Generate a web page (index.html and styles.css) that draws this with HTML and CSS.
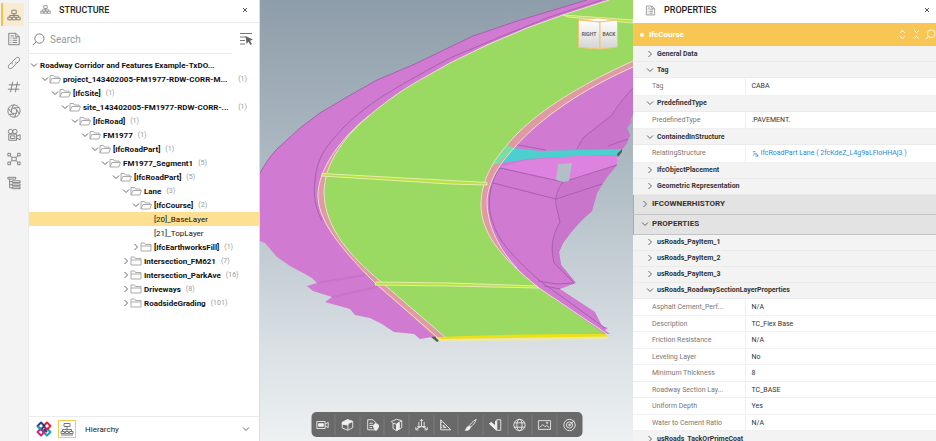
FILE: index.html
```
<!DOCTYPE html>
<html lang="en">
<head>
    <meta charset="UTF-8">
    <meta name="viewport" content="width=device-width, initial-scale=1.0">
    <title>Model Viewer</title>
    <link rel="stylesheet" href="styles.css">
</head>
<body>
    <!-- shared icons -->
    <svg class="sprite" aria-hidden="true">
        <symbol id="i-down" viewBox="0 0 8 8"><path d="M1 2.500 4 5.500 7 2.500"/></symbol>
        <symbol id="i-right" viewBox="0 0 8 8"><path d="M2.500 1 5.500 4 2.500 7"/></symbol>
        <symbol id="i-close" viewBox="0 0 8 8"><path d="M2 2 6 6M6 2 2 6"/></symbol>
        <symbol id="i-open" viewBox="0 0 12 10"><path d="M1 9V1.500h3.500l1 1.500H10v1.500M1 9l1.800-4.500H11.500L9.800 9z"/></symbol>
        <symbol id="i-folder" viewBox="0 0 12 10"><path d="M1 9V1h3.500l1 1.500H11V9zM1 4h10"/></symbol>
        <symbol id="i-tree" viewBox="0 0 16 16"><path d="M5.500 2.500h5v4h-5zM1 10.500h4v3H1zM6 10.500h4v3H6zM11 10.500h4v3h-4zM8 6.500v4M3 10.500v-2h10v2"/></symbol>
        <symbol id="i-doc" viewBox="0 0 16 16"><path d="M2 1.500h8l4 4v9H2zM10 1.500v4h4M6.500 7h5M6.500 9.500h5M6.500 12h5M4 7h1M4 9.500h1M4 12h1M4 4.500h4"/></symbol>
        <symbol id="i-search" viewBox="0 0 14 14"><circle cx="8" cy="6" r="5"/><path d="M4.500 9.500 1 13"/></symbol>
    </svg>

    <div class="app">
        <nav class="rail" aria-label="Panels">
            <button class="rail-btn active" aria-label="Structure"><svg><use href="#i-tree"/></svg></button>
            <button class="rail-btn" aria-label="Properties"><svg><use href="#i-doc"/></svg></button>
            <button class="rail-btn" aria-label="Links"><svg viewBox="0 0 16 16"><path d="M6.500 9.500C5 8 5.500 7 6.500 6L10 2.500c3-2.500 6 .5 3.500 3.500L11 8.500M9.500 6.500C11 8 10.500 9 9.500 10L6 13.500c-3 2.500-6-.5-3.500-3.500L5 7.500"/></svg></button>
            <button class="rail-btn" aria-label="Numbers"><svg viewBox="0 0 16 16"><path d="M6.500 2 4 14M12 2 9.500 14M2 5.500h13M1 10.500h13"/></svg></button>
            <button class="rail-btn" aria-label="Snapshots"><svg viewBox="0 0 16 16"><circle cx="8" cy="8" r="7"/><path d="M8 4.500l3 1.800v3.500L8 11.500 5 9.800V6.300zM8 4.500 13.500 4M11 6.300 14 11.500M11 9.800 8.500 15M8 11.500 2.500 12M5 9.800 1.500 5M5 6.300 7.500 1"/></svg></button>
            <button class="rail-btn" aria-label="Camera"><svg viewBox="0 0 16 16"><circle cx="4" cy="4" r="2.500"/><circle cx="9" cy="4" r="2.500"/><path d="M2 7h9v7H2zM11 9.500l4-2v6l-4-2M4 9h5v3H4z"/></svg></button>
            <button class="rail-btn" aria-label="Relations"><svg viewBox="0 0 16 16"><path d="M1 1.500h3v3H1zM12 1.500h3v3h-3zM1 11.500h3v3H1zM12 11.500h3v3h-3zM5.500 6h5v4h-5zM4 4.500 5.500 6M12 4.500 10.500 6M4 11.500 5.500 10M12 11.500 10.500 10"/></svg></button>
            <button class="rail-btn" aria-label="Outline"><svg viewBox="0 0 16 16"><path d="M1 1.500h9v2H1zM3 3.500v10h3M3 6.500h3M3 10h3M6 5.500h9v2H6zM6 9h9v2H6zM6 12.500h9v2H6z"/></svg></button>
        </nav>

        <section class="structure">
            <header class="panel-head">
                <svg class="head-icon"><use href="#i-tree"/></svg>
                <h2>STRUCTURE</h2>
                <button class="close" aria-label="Close structure"><svg><use href="#i-close"/></svg></button>
            </header>
            <div class="search-row">
                <label class="search">
                    <svg><use href="#i-search"/></svg>
                    <input type="text" placeholder="Search" aria-label="Search">
                </label>
                <button class="filter" aria-label="Filter"><svg viewBox="0 0 14 14"><path d="M1 1.500h12M1 5h6M1 8.500h5M1 12h5"/><path class="solid" d="M6.500 4l7.500 3.500-3 1.200 2 3.300-1.500 1-2-3.300L7.500 12z"/></svg></button>
            </div>

            <ul class="tree" role="tree">
                <li class="node root"><svg class="chev"><use href="#i-down"/></svg><b>Roadway Corridor and Features Example-TxDO...</b></li>
                <li class="node l1"><svg class="chev"><use href="#i-down"/></svg><svg class="folder"><use href="#i-open"/></svg><b>project_143402005-FM1977-RDW-CORR-M...</b><span class="count end">(1)</span></li>
                <li class="node l2"><svg class="chev"><use href="#i-down"/></svg><svg class="folder"><use href="#i-open"/></svg><b>[IfcSite]</b><span class="count">(1)</span></li>
                <li class="node l3"><svg class="chev"><use href="#i-down"/></svg><svg class="folder"><use href="#i-open"/></svg><b>site_143402005-FM1977-RDW-CORR-...</b><span class="count end">(1)</span></li>
                <li class="node l4"><svg class="chev"><use href="#i-down"/></svg><svg class="folder"><use href="#i-open"/></svg><b>[IfcRoad]</b><span class="count">(1)</span></li>
                <li class="node l5"><svg class="chev"><use href="#i-down"/></svg><svg class="folder"><use href="#i-open"/></svg><b>FM1977</b><span class="count">(1)</span></li>
                <li class="node l6"><svg class="chev"><use href="#i-down"/></svg><svg class="folder"><use href="#i-open"/></svg><b>[IfcRoadPart]</b><span class="count">(1)</span></li>
                <li class="node l7"><svg class="chev"><use href="#i-down"/></svg><svg class="folder"><use href="#i-open"/></svg><b>FM1977_Segment1</b><span class="count">(5)</span></li>
                <li class="node l8"><svg class="chev"><use href="#i-down"/></svg><svg class="folder"><use href="#i-open"/></svg><b>[IfcRoadPart]</b><span class="count">(5)</span></li>
                <li class="node l9"><svg class="chev"><use href="#i-down"/></svg><svg class="folder"><use href="#i-open"/></svg><b>Lane</b><span class="count">(3)</span></li>
                <li class="node l10"><svg class="chev"><use href="#i-down"/></svg><svg class="folder"><use href="#i-open"/></svg><b>[IfcCourse]</b><span class="count">(2)</span></li>
                <li class="node leaf selected">[20]_BaseLayer</li>
                <li class="node leaf">[21]_TopLayer</li>
                <li class="node l10"><svg class="chev"><use href="#i-right"/></svg><svg class="folder"><use href="#i-folder"/></svg><b>[IfcEarthworksFill]</b><span class="count">(1)</span></li>
                <li class="node l9"><svg class="chev"><use href="#i-right"/></svg><svg class="folder"><use href="#i-folder"/></svg><b>Intersection_FM621</b><span class="count">(7)</span></li>
                <li class="node l9"><svg class="chev"><use href="#i-right"/></svg><svg class="folder"><use href="#i-folder"/></svg><b>Intersection_ParkAve</b><span class="count">(16)</span></li>
                <li class="node l9"><svg class="chev"><use href="#i-right"/></svg><svg class="folder"><use href="#i-folder"/></svg><b>Driveways</b><span class="count">(8)</span></li>
                <li class="node l9"><svg class="chev"><use href="#i-right"/></svg><svg class="folder"><use href="#i-folder"/></svg><b>RoadsideGrading</b><span class="count">(101)</span></li>
            </ul>

            <footer class="structure-foot">
                <svg class="logo" viewBox="0 0 16 16" aria-hidden="true">
                    <path class="logo-cyan" d="M11 7.500 14.500 11 11 14.500 7.500 11z"/>
                    <path class="logo-pink" d="M5 7.500 8.500 11 5 14.500 1.500 11z"/>
                    <path class="logo-red" d="M11 1.500 14.500 5 11 8.500 7.500 5z"/>
                    <path class="logo-blue" d="M5 1.500 8.500 5 5 8.500 1.500 5z"/>
                    <path class="logo-cyan" d="M1.500 5 5 8.500"/>
                    <path class="logo-red" d="M7.500 11 5 8"/>
                    <path class="logo-blue" d="M8 8 11 11"/>
                </svg>
                <button class="mode" aria-label="Tree mode"><svg viewBox="0 0 14 14"><path d="M4 1.500h6v3H4zM7 4.500v5M2.500 9.500v-2h9v2M1 9.500h3.500v2H1zM5.500 9.500h3v2h-3zM9.500 9.500H13v2H9.500zM1 13h12"/></svg></button>
                <select class="view-select" aria-label="View">
                    <option>Hierarchy</option>
                </select>
                <svg class="chev"><use href="#i-down"/></svg>
            </footer>
        </section>

        <main class="viewer">
            <svg class="scene" viewBox="260 0 373 441" preserveAspectRatio="xMidYMid slice" role="img" aria-label="Road model">
                <!-- embankment, left -->
                <path class="grading" d="M587 0 557 9 517 21 473 36 450 47 415 64 377 80 347 97 320 113 300 128 277 149C270 156 265 164 260 173V241L265 243 277 257 290 266 305 274 312 278 317 283 307 286 313 291 332 297 325 302 350 309 355 315 370 318 382 324 394 332 414 334 420 339 432 337 445 337 400 200 640 0z"/>
                <path class="crease" d="M587 0 557 9 517 21 473 36 450 47 415 64 377 80 347 97 320 113 300 128 277 149C270 156 265 164 260 173"/>
                <path class="crease" d="M602 0 550 17 500 37 450 58C420 74 390 91 377 100 365 108 352 119 343 128 333 139 327 146 323 153 318 162 316 170 315 180 313 195 315 207 322 221"/>
                <path class="shade" d="M317 283 365 275 M332 297 377 287"/>
                <!-- embankment, right -->
                <path class="grading" d="M633 64V114L630 118 632 122 627 128 630 135 627 143 622 150 617 157V165L607 177 600 188 597 193 592 211 582 220 572 231 563 243 559 252 561 265 576 283 560 289 595 312 602 326 608 328 605 330 610 334 600 334 480 260V160L540 100z"/>
                <path class="grading-light" d="M500 167 527 160 577 156 617 156V165L564 182z"/>
                <path class="grading-dark" d="M564 182 617 165 607 177 600 188 597 193 592 211 582 220 572 231 563 243 559 252 561 265 576 283 554 263C551 250 552 238 560 222L556 199zM633 88 612 115 583 138 577 149 622 150 627 143 630 135 627 128 633 114z"/>
                <path class="crease" d="M633 88C622 100 617 107 612 115L583 138 577 149M608 146 628 139M507 143 546 150M500 168 563 182 617 165M493 183 556 199 602 184M563 182C556 192 555 199 556 205L560 222C551 237 551 250 554 263L574 283M538 281 557 284 574 283M500 168C488 184 487 209 493 223 498 240 512 256 540 281L605 328M544 286 560 289"/>
                <path class="hole" d="M558 164 572 163 569 181 563 182 556 180z"/>
                <path class="culvert" d="M507 145 513 148 540 151 577 150 622 149 618 155 577 156 527 159 491 165z"/>
                <path class="culvert-end" d="M622 149V152L618 157 617 154z"/>
                <!-- pavement -->
                <path class="curb" d="M633 61C580 85 533 113 507 145 494 160 481 180 481 205 481 232 500 257 539 288L517 268C505 256 488 232 487 203 487 185 497 166 515 147 540 118 585 88 633 67z"/>
                <path class="curb" d="M370 115C340 138 318 170 318 195 318 217 333 241 375 283L435 337H445L380 281C350 256 325 228 324 193 324 170 337 142 370 115z"/>
                <path class="curb-culvert" d="M507 145 515 148C508 154 502 160 499 164L491 165C495 158 500 151 507 145z"/>
                <path class="pavement" d="M609 0 563 15 527 28 487 45 450 63 427 76C407 87 390 98 370 115 347 134 324 162 324 193 325 228 350 256 380 281L445 337 605 334 539 288C500 257 481 232 481 205 481 180 494 160 507 145 533 113 580 85 633 61V0z"/>
                <path class="edge" d="M609 0 563 15 527 28 487 45 450 63 427 76C407 87 390 98 370 115 347 134 324 162 324 193 325 228 350 256 380 281L445 337"/>
                <path class="edge" d="M370 115C340 138 318 170 318 195 318 217 333 241 375 283L437 337"/>
                <path class="edge" d="M633 61C580 85 533 113 507 145 494 160 481 180 481 205 481 232 500 257 539 288L607 334"/>
                <path class="edge" d="M633 67C585 88 540 118 515 147 497 166 487 185 487 203 488 232 505 256 517 268"/>
                <!-- transverse joints -->
                <path class="joint" d="M322 173.500 450 180.500 487 182.500V185L450 184 322 176zM376 282 450 283 537 286 539 288 450 286 375 285zM563 15 633 20V23L568 17z"/>
                <!-- pavement end face -->
                <path class="end-face" d="M437 337 520 334.500 605 334 608 337 440 340z"/>
                <path class="end-base" d="M440 339 608 336.500V339.500L439 342 435 337z"/>
                <path class="culvert-end" d="M431 337 435 336.500 439 341 437 342z"/>
            </svg>

            <svg class="view-cube" viewBox="0 0 42 34" role="img" aria-label="View cube">
                <defs>
                    <linearGradient id="cube-face" x1="0" y1="0" x2="0" y2="1">
                        <stop offset="0" stop-color="#fff"/>
                        <stop offset="1" stop-color="#d4d4d4"/>
                    </linearGradient>
                </defs>
                <path class="cube-top" d="M2 3 20 1 40 3 23 5z"/>
                <path class="cube-side" d="M1.500 3 23 5V32L1.500 30.500z"/>
                <path class="cube-side" d="M23 5 40.500 3V30L23 32z"/>
                <text x="12" y="19">RIGHT</text>
                <text x="32" y="19">BACK</text>
            </svg>

            <div class="toolbar">
                <button aria-label="Camera"><svg viewBox="0 0 16 16"><path d="M1.500 4h9.500v8H1.500zM11 7l3.500-2v6L11 9"/><path class="solid" d="M3.500 6.500h5.500v3H3.500z"/></svg></button>
                <button aria-label="Shading"><svg viewBox="0 0 16 16"><path d="M2 5 8 2l6 2v7l-5.500 3L2 11.500zM8.500 7V14"/><path class="solid" d="M2 5 8 2l6 2-5.500 2.500V8L2 7z"/></svg></button>
                <button aria-label="Report"><svg viewBox="0 0 16 16"><path d="M2.500 2h6l3 3v8.500h-9zM4.500 6h4M4.500 8.500h4M4.500 11h3"/><path class="solid" d="M12 6.500a3 3 0 0 1 3 3c0 2-3 5-3 5s-3-3-3-5a3 3 0 0 1 3-3z"/></svg></button>
                <button aria-label="Section box"><svg viewBox="0 0 16 16"><path d="M2 4 8 1.500l6 1.500v8L8 14.500 4 12V6L2 4zM4 6l4 1v7.500M8 7l6-4M11 5v8"/><path class="solid" d="M8.500 7 11 5.500v7L8.500 14z"/></svg></button>
                <button aria-label="Axes"><svg viewBox="0 0 16 16"><path d="M8 1.500V9M8 9 2 13M8 9l6 4M5 4.500v7M11 4.500v7M6 3.500l2-2 2 2M1.500 10.500V13.500h3M14.500 10.500v3h-3M3 10h10"/></svg></button>
                <button aria-label="Measure"><svg viewBox="0 0 16 16"><path d="M2.500 2 14 13.500H2.500zM5.500 8l3 3h-3zM2.500 5H4M2.500 8H4M2.500 11H4"/></svg></button>
                <button aria-label="Paint"><svg viewBox="0 0 16 16"><path d="M14.500 1.500C10 4 8 7 7 8.500l1.500 1.500C10.500 8.500 13 6 14.500 1.500z"/><path class="solid" d="M6.500 9 8 10.500C7.500 13.500 4.500 14.500 2 14c1.500-1 1-4 4.500-5z"/></svg></button>
                <button aria-label="Clip"><svg viewBox="0 0 16 16"><path d="M9.500 2H14v12H9.500z"/><path class="solid" d="M1 6.500 3 5l5 4V3.500h1V14z"/></svg></button>
                <button aria-label="Globe"><svg viewBox="0 0 16 16"><circle cx="8" cy="8" r="6.500"/><ellipse cx="8" cy="8" rx="3" ry="6.500"/><path d="M2 5.500h12M2 10.500h12"/></svg></button>
                <button aria-label="Image"><svg viewBox="0 0 16 16"><path d="M1 3h14v10H1zM2.500 11 6 7.500l2.500 2.500 2-1.500 3 2.500"/><circle cx="11" cy="5.500" r=".8"/></svg></button>
                <button aria-label="Target"><svg viewBox="0 0 16 16"><circle cx="8" cy="8" r="6.500"/><circle cx="8" cy="8" r="3.500"/><circle cx="8" cy="8" r="1"/><path d="M8 8l5.500-5"/></svg></button>
            </div>
        </main>

        <section class="properties">
            <header class="panel-head">
                <svg class="head-icon"><use href="#i-doc"/></svg>
                <h2>PROPERTIES</h2>
                <button class="close" aria-label="Close properties"><svg><use href="#i-close"/></svg></button>
            </header>
            <div class="entity">
                <span class="dot"></span>
                <h3>IfcCourse</h3>
                <button aria-label="Expand all"><svg viewBox="0 0 12 12"><path d="M3.500 4 6 1.500 8.500 4M3.500 8 6 10.500 8.500 8"/></svg></button>
                <button aria-label="Collapse all"><svg viewBox="0 0 12 12"><path d="M3.500 1.500 6 4 8.500 1.500M3.500 10.500 6 8l2.500 2.500"/></svg></button>
                <button aria-label="Search properties"><svg><use href="#i-search"/></svg></button>
            </div>

            <button class="group"><svg class="chev"><use href="#i-right"/></svg>General Data</button>
            <button class="group"><svg class="chev"><use href="#i-down"/></svg>Tag</button>
            <table>
                <tr><th scope="row">Tag</th><td>CABA</td></tr>
            </table>
            <button class="group"><svg class="chev"><use href="#i-down"/></svg>PredefinedType</button>
            <table>
                <tr><th scope="row">PredefinedType</th><td>.PAVEMENT.</td></tr>
            </table>
            <button class="group"><svg class="chev"><use href="#i-down"/></svg>ContainedInStructure</button>
            <table>
                <tr><th scope="row">RelatingStructure</th><td><a href="#"><svg viewBox="0 0 8 8"><path d="M1 2h3M2 4.500h3M4 7h3M5 4l2 3M1 6h1"/></svg>IfcRoadPart Lane ( 2fcKdeZ_L4g9aLFloHHAj3 )</a></td></tr>
            </table>
            <button class="group"><svg class="chev"><use href="#i-right"/></svg>IfcObjectPlacement</button>
            <button class="group"><svg class="chev"><use href="#i-right"/></svg>Geometric Representation</button>

            <button class="section"><svg class="chev"><use href="#i-right"/></svg>IFCOWNERHISTORY</button>
            <button class="section"><svg class="chev"><use href="#i-down"/></svg>PROPERTIES</button>

            <button class="group"><svg class="chev"><use href="#i-right"/></svg>usRoads_PayItem_1</button>
            <button class="group"><svg class="chev"><use href="#i-right"/></svg>usRoads_PayItem_2</button>
            <button class="group"><svg class="chev"><use href="#i-right"/></svg>usRoads_PayItem_3</button>
            <button class="group"><svg class="chev"><use href="#i-down"/></svg>usRoads_RoadwaySectionLayerProperties</button>
            <table>
                <tr><th scope="row">Asphalt Cement_Perf...</th><td>N/A</td></tr>
                <tr><th scope="row">Description</th><td>TC_Flex Base</td></tr>
                <tr><th scope="row">Friction Resistance</th><td>N/A</td></tr>
                <tr><th scope="row">Leveling Layer</th><td>No</td></tr>
                <tr><th scope="row">Minimum Thickness</th><td>8</td></tr>
                <tr><th scope="row">Roadway Section Lay...</th><td>TC_BASE</td></tr>
                <tr><th scope="row">Uniform Depth</th><td>Yes</td></tr>
                <tr><th scope="row">Water to Cement Ratio</th><td>N/A</td></tr>
            </table>
            <button class="group"><svg class="chev"><use href="#i-right"/></svg>usRoads_TackOrPrimeCoat</button>
        </section>
    </div>
</body>
</html>
```
FILE: styles.css
```
* {
    box-sizing: border-box;
}
body {
    margin: 0;
    font-family: Roboto, Arial, sans-serif;
    font-size: 8px;
    color: #222;
    background-color: #fff;
}
button, input, select {
    font: inherit;
    color: inherit;
    background: none;
    border: none;
    margin: 0;
    padding: 0;
}
button {
    cursor: pointer;
}
svg {
    display: block;
    flex: none;
    fill: none;
    stroke: #777;
}
.sprite {
    position: absolute;
    width: 0;
    height: 0;
}
.app {
    display: grid;
    grid-template-columns: 29px 231px 1fr 303px;
    height: 100vh;
    overflow: hidden;
}

/* Left icon rail */
.rail {
    background-color: #f3f3f3;
    border-right: 1px solid #ebebeb;
    padding: 3px 4px 0 1px;
    display: flex;
    flex-direction: column;
    gap: 1px;
}
.rail-btn {
    height: 23px;
    border-left: 2px solid transparent;
    display: flex;
    align-items: center;
    justify-content: center;
}
.rail-btn.active {
    background-color: #f8ebd0;
    border-left-color: #f8c040;
}
.rail-btn svg {
    width: 14px;
    height: 14px;
}

/* Panel header */
.panel-head {
    height: 23px;
    flex: none;
    padding: 0 5px 3px 12px;
    display: flex;
    align-items: center;
}
.panel-head h2 {
    margin: 0 auto 0 8px;
    font-size: 9px;
    font-weight: 500;
}
.head-icon {
    width: 11px;
    height: 11px;
}
.close svg {
    width: 8px;
    height: 8px;
    stroke: #555;
}

/* Structure panel */
.structure {
    display: flex;
    flex-direction: column;
    min-width: 0;
    border-right: 1px solid #ddd;
}
.structure .panel-head {
    padding-left: 11px;
    padding-right: 10px;
    border-bottom: 1px solid #ebebeb;
}
.search-row {
    display: flex;
    align-items: center;
    padding-right: 6px;
    gap: 7px;
}
.search {
    flex: 1;
    height: 31px;
    padding: 2px 0 0 3px;
    display: flex;
    align-items: center;
    gap: 5px;
    border-bottom: 1px solid #ebebeb;
}
.search svg {
    width: 13px;
    height: 13px;
}
.search input {
    width: 100%;
    min-width: 0;
    font-size: 10px;
    outline: none;
}
.search input::placeholder {
    color: #999;
}
.filter svg {
    width: 14px;
    height: 14px;
}
.filter .solid {
    fill: #666;
    stroke: none;
}
.tree {
    flex: 1;
    list-style: none;
    margin: 0;
    padding: 4px 0 0;
    overflow: hidden;
}
.node {
    height: 14px;
    display: flex;
    align-items: center;
    white-space: nowrap;
    color: #111;
}
.node b {
    font-weight: 700;
}
.chev {
    width: 8px;
    height: 8px;
    stroke: #666;
}
.folder {
    width: 12px;
    height: 10px;
    margin-right: 2px;
    stroke: #aaa;
}
.count {
    margin-left: 5px;
    font-size: 7px;
    color: #999;
}
.count.end {
    margin-left: auto;
    padding-right: 12px;
}
.root { padding-left: 1px; }
.root .chev { margin-right: 2px; }
.l1 { padding-left: 12px; }
.l2 { padding-left: 22px; }
.l3 { padding-left: 32px; }
.l4 { padding-left: 42px; }
.l5 { padding-left: 52px; }
.l6 { padding-left: 62px; }
.l7 { padding-left: 72px; }
.l8 { padding-left: 83px; }
.l9 { padding-left: 93px; }
.l10 { padding-left: 103px; }
.leaf { padding-left: 125px; }
.selected {
    background-color: #fde092;
}
.structure-foot {
    height: 25px;
    padding: 0 9px 0 7px;
    border-top: 1px solid #ebebeb;
    display: flex;
    align-items: center;
    gap: 6px;
}
.logo {
    width: 16px;
    height: 16px;
    stroke-width: 2;
    stroke-linejoin: round;
}
.logo-blue { stroke: #2b3f8c; }
.logo-red { stroke: #e0203c; }
.logo-cyan { stroke: #12a5b5; }
.logo-pink { stroke: #c4268c; }
.mode {
    border: 1px solid #f8c653;
    padding: 1px;
}
.mode svg {
    width: 14px;
    height: 14px;
}
.view-select {
    flex: 1;
    margin-left: 3px;
    appearance: none;
    font-size: 8px;
}

/* 3D viewer */
.viewer {
    position: relative;
    min-width: 0;
    overflow: hidden;
    background: linear-gradient(#8e9daa, #b4c0c8 45%, #dbe1e5 80%, #edf1f2);
}
.scene {
    width: 100%;
    height: 100%;
    stroke: none;
}
.grading { fill: #d07ad2; }
.grading-light { fill: #de82e0; }
.grading-dark { fill: #c975cb; }
.pavement { fill: #9ad962; }
.curb { fill: #df9aa2; }
.curb-culvert { fill: #7bdd9f; }
.culvert { fill: #4ccfcf; }
.culvert-end { fill: #556055; }
.hole { fill: #b2bfc7; }
.joint {
    fill: #bde03c;
    stroke: #e2efb0;
    stroke-width: 1;
}
.end-face { fill: #f0e010; }
.end-base { fill: #e8e8b4; }
.edge {
    fill: none;
    stroke: #eddfd0;
    stroke-width: 1;
}
.crease {
    fill: none;
    stroke: #a95fae;
    stroke-width: 1;
}
.shade {
    fill: none;
    stroke: #c873ca;
    stroke-width: 2;
}
.view-cube {
    position: absolute;
    top: 17px;
    right: 14px;
    width: 42px;
    height: 34px;
    stroke: #f3c66c;
}
.cube-top { fill: #fff; }
.cube-side { fill: url(#cube-face); }
.view-cube text {
    font-size: 5px;
    font-weight: 700;
    text-anchor: middle;
    fill: #666;
    stroke: none;
}
.toolbar {
    position: absolute;
    left: 50%;
    bottom: 4px;
    transform: translateX(-50%);
    width: 271px;
    height: 25px;
    display: grid;
    grid-template-columns: repeat(11, 1fr);
    align-items: center;
    background-color: #696969;
    border-radius: 5px;
}
.toolbar button {
    height: 20px;
    display: flex;
    align-items: center;
    justify-content: center;
    border-right: 1px solid #7c7c7c;
}
.toolbar button:last-child {
    border-right: none;
}
.toolbar svg {
    width: 14px;
    height: 14px;
    stroke: #f0f0f0;
}
.toolbar .solid {
    fill: #f0f0f0;
}

/* Properties panel */
.properties {
    display: flex;
    flex-direction: column;
    min-width: 0;
    overflow: hidden;
    font-size: 7px;
}
.entity {
    height: 23px;
    flex: none;
    padding: 0 0 0 7px;
    display: flex;
    align-items: center;
    background-color: #f8c653;
    color: #fff;
}
.entity h3 {
    margin: 0 auto 0 5px;
    font-size: 8px;
    font-weight: 700;
}
.dot {
    width: 4px;
    height: 4px;
    border-radius: 50%;
    background-color: #fff;
}
.entity svg {
    width: 11px;
    height: 11px;
    margin-left: 3px;
    stroke: #fff;
}
.group, .section {
    flex: none;
    display: flex;
    align-items: center;
    text-align: left;
    font-weight: 700;
    color: #333;
}
.group {
    height: 16px;
    padding-left: 13px;
    gap: 3px;
    background-color: #f3f3f3;
    border-bottom: 1px solid #ebebeb;
}
.section {
    height: 20px;
    padding: 0 0 1px 7px;
    gap: 3px;
    font-size: 8px;
    background-color: #e3e3e3;
    border-left: 1px solid #aaa;
    border-bottom: 1px solid #c4c4c4;
}
table {
    width: 100%;
    flex: none;
    table-layout: fixed;
    border-collapse: collapse;
}
tr {
    height: 17px;
}
tr:nth-child(even) {
    height: 16px;
}
th, td {
    padding: 0;
    border-bottom: 1px solid #f0f0f0;
    white-space: nowrap;
}
th {
    width: 112px;
    padding-left: 19px;
    text-align: left;
    font-weight: 400;
    color: #777;
}
td {
    padding-left: 6px;
    border-left: 1px solid #f0f0f0;
    color: #333;
}
td a {
    display: flex;
    align-items: center;
    gap: 2px;
    color: #2e86d6;
    text-decoration: none;
}
td svg {
    width: 7px;
    height: 7px;
    stroke: #2e86d6;
}
```
